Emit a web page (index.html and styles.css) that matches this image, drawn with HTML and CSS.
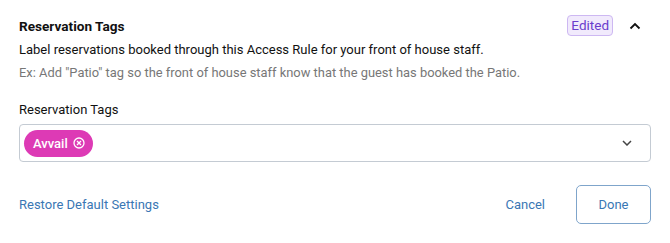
FILE: index.html
```html
<!DOCTYPE html>
<html>
<head>
<meta charset="utf-8">
<link rel="stylesheet" href="styles.css">
</head>
<body>
<div class="panel">
  <div class="header">
    <h2 class="title">Reservation Tags</h2>
    <div class="header-right">
      <span class="badge">Edited</span>
      <svg class="chev-up" width="12" height="8" viewBox="0 0 12 8"><path d="M1.5 6.5 L6 2 L10.5 6.5" fill="none" stroke="#111" stroke-width="1.8"/></svg>
    </div>
  </div>
  <p class="desc">Label reservations booked through this Access Rule for your front of house staff.</p>
  <p class="example">Ex: Add "Patio" tag so the front of house staff know that the guest has booked the Patio.</p>
  <div class="field-label">Reservation Tags</div>
  <div class="select">
    <span class="chip">Avvail
      <svg class="chip-x" width="12" height="12" viewBox="0 0 12 12"><circle cx="6" cy="6" r="5" fill="none" stroke="#fff" stroke-width="1.3"/><path d="M4 4 L8 8 M8 4 L4 8" stroke="#fff" stroke-width="1.3"/></svg>
    </span>
    <svg class="chev-down" width="10" height="6" viewBox="0 0 10 6"><path d="M1 1 L5 5 L9 1" fill="none" stroke="#444" stroke-width="1.5"/></svg>
  </div>
  <div class="footer">
    <button class="link">Restore Default Settings</button>
    <div class="actions">
      <button class="link">Cancel</button>
      <button class="btn-outline">Done</button>
    </div>
  </div>
</div>
</body>
</html>
```
FILE: styles.css
```css
html, body {
  margin: 0;
  padding: 0;
  background: #fff;
}
body {
  font-family: Roboto, "Liberation Sans", sans-serif;
  color: #111;
}
.panel {
  padding: 15px 19px 0 19px;
  width: 632px;
}
.header {
  display: flex;
  align-items: center;
  justify-content: space-between;
  height: 21px;
}
.title {
  margin: 0;
  font-size: 13.6px;
  font-weight: 700;
  color: #111;
}
.header-right {
  display: flex;
  align-items: center;
  gap: 16px;
  margin-right: 10px;
}
.badge {
  box-sizing: border-box;
  height: 21px;
  padding: 0 3px;
  border: 1px solid #cdb8f2;
  background: #f1eafc;
  color: #6a3dcc;
  border-radius: 4px;
  font-size: 13.5px;
  line-height: 19px;
}
.chev-up { display: block; }
.desc {
  margin: 2px 0 0 0;
  font-size: 13px;
  line-height: 23px;
  color: #111;
}
.example {
  margin: 0;
  font-size: 12.9px;
  line-height: 23px;
  color: #777;
}
.field-label {
  margin-top: 17px;
  font-size: 13px;
  line-height: 18px;
  color: #111;
}
.select {
  box-sizing: border-box;
  margin-top: 5px;
  height: 38px;
  border: 1px solid #c4cbd3;
  border-radius: 4px;
  display: flex;
  align-items: center;
  justify-content: space-between;
  padding: 0 18px 0 4px;
}
.chip {
  display: inline-flex;
  align-items: center;
  gap: 5px;
  height: 27px;
  padding: 0 8px 0 9px;
  background: #dd3ab5;
  color: #fff;
  border-radius: 14px;
  font-size: 13px;
  font-weight: 500;
}
.chip-x { display: block; }
.chev-down { display: block; }
.footer {
  margin-top: 23px;
  display: flex;
  align-items: center;
  justify-content: space-between;
}
.actions {
  display: flex;
  align-items: center;
  gap: 31px;
}
button {
  font-family: inherit;
  font-size: 13px;
  cursor: pointer;
}
.link {
  background: none;
  border: none;
  padding: 0;
  color: #3a77b4;
}
.btn-outline {
  box-sizing: border-box;
  width: 75px;
  height: 39px;
  background: #fff;
  border: 1px solid #7fa5cb;
  border-radius: 5px;
  color: #3a77b4;
}
```
